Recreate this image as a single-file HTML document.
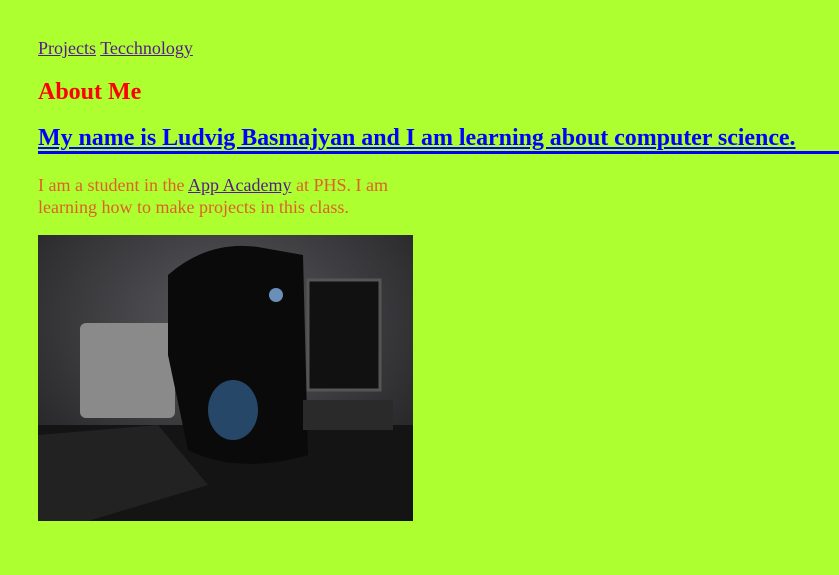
<!DOCTYPE html>
<html><head><style>
body{margin:0;background:#adff2f;width:839px;height:575px;overflow:hidden;font-family:"Liberation Serif","Times New Roman",Times,serif;position:relative}
a{color:#551a8b;text-decoration:underline}
.a{position:absolute;left:38px;white-space:nowrap}
</style></head><body>
<div class="a" style="top:38px;font-size:18px"><a>Projects</a> <a>Tecchnology</a></div>
<div class="a" style="top:79px;font-size:24px;font-weight:bold;color:#f00">About Me</div>
<div class="a" style="top:125px;font-size:24px;font-weight:bold;color:#00f;text-decoration:underline;letter-spacing:-0.05px">My name is Ludvig Basmajyan and I am learning about computer science.</div>
<div style="position:absolute;left:38px;right:0;top:151px;height:3px;background:#00f"></div>
<div style="position:absolute;left:38px;top:174px;width:370px;font-size:18px;line-height:22px;color:#e0602a">I am a student in the <a>App Academy</a> at PHS. I am learning how to make projects in this class.</div>
<svg style="position:absolute;left:38px;top:235px" width="375" height="286" viewBox="0 0 375 286">
<defs><radialGradient id="g" cx="0.5" cy="0.3" r="0.8"><stop offset="0" stop-color="#5a5a5e"/><stop offset="1" stop-color="#1a1a1c"/></radialGradient></defs>
<rect width="375" height="286" fill="url(#g)"/>
<rect y="190" width="375" height="96" fill="#141414"/>
<rect x="42" y="88" width="95" height="95" rx="6" fill="#8a8a8a"/>
<rect x="270" y="45" width="72" height="110" fill="#111" stroke="#555" stroke-width="3"/>
<path d="M130 40 Q170 5 220 12 L265 20 L270 220 Q200 240 150 215 L130 120 Z" fill="#0a0a0a"/>
<ellipse cx="195" cy="175" rx="25" ry="30" fill="#3a6fa8" opacity="0.6"/>
<circle cx="238" cy="60" r="7" fill="#6a8fb8"/>
<rect x="265" y="165" width="90" height="30" fill="#2a2a2a"/>
<path d="M0 200 L120 190 L170 250 L50 286 L0 286 Z" fill="#222"/>
</svg>
</body></html>
